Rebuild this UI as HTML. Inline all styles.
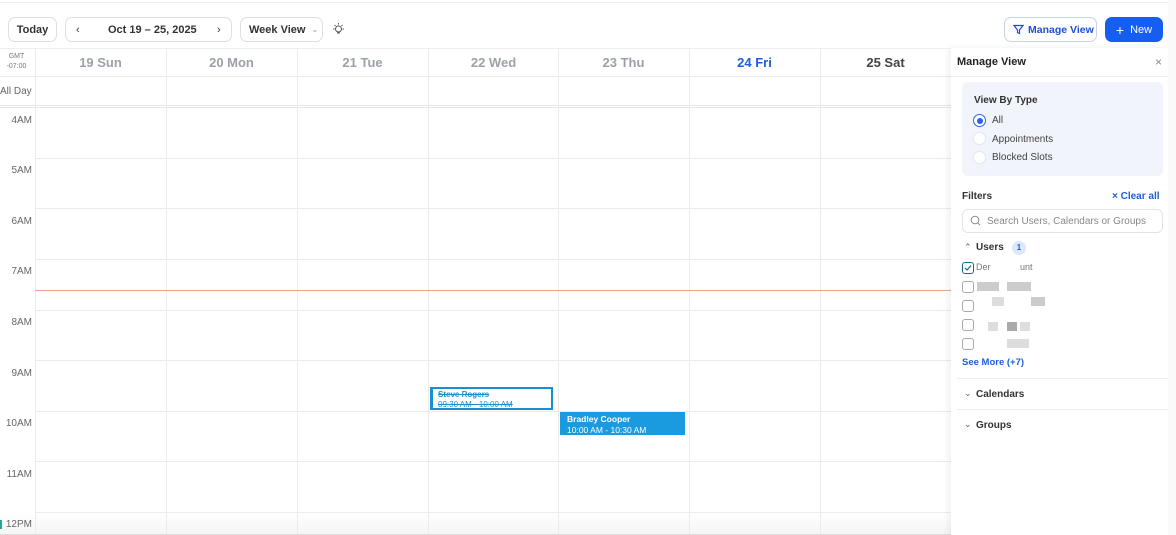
<!DOCTYPE html>
<html><head><style>
*{box-sizing:border-box;margin:0;padding:0}
body{width:1176px;height:535px;overflow:hidden;background:#fff;font-family:"Liberation Sans",sans-serif;color:#333;position:relative}
.a{position:absolute;white-space:nowrap}
.btn{position:absolute;white-space:nowrap;border:1px solid #dcdfe4;border-radius:7px;background:#fff;font-size:11px;font-weight:bold;color:#333;display:flex;align-items:center}
.vl{position:absolute;top:48px;bottom:0;width:1px;background:#ebebeb}
.hl{position:absolute;left:35px;width:916px;height:1px;background:#ebebeb}
.day{position:absolute;top:55px;font-size:13px;font-weight:bold;color:#9ca0a8;text-align:center;width:131px}
.tm{position:absolute;left:0;width:32px;text-align:right;font-size:10px;color:#666}
.cb{position:absolute;left:962px;width:12px;height:12px;border:1px solid #aaa;border-radius:3px;background:#fff}
.bl{position:absolute;height:9px;background:#ccc}
</style></head><body>
<div class="a" style="left:0;top:2px;width:1176px;height:1px;background:#eee"></div>
<div class="btn" style="left:8px;top:17px;width:49px;height:25px;justify-content:center">Today</div>
<div class="btn" style="left:65px;top:17px;width:167px;height:25px"><span style="position:absolute;left:10px;font-weight:normal">‹</span><span style="position:absolute;left:42px">Oct 19 – 25, 2025</span><span style="position:absolute;left:151px;font-weight:normal">›</span></div>
<div class="btn" style="left:240px;top:17px;width:83px;height:25px"><span style="margin-left:8px">Week View</span><span style="margin-left:6px;font-size:8px;color:#999;font-weight:normal">⌄</span></div>
<svg class="a" style="left:331px;top:22px" width="15" height="15" viewBox="0 0 15 15" fill="none" stroke="#555" stroke-width="1"><circle cx="7.5" cy="7" r="3"/><path d="M6 11h3M7.5 1v1.5M2 7h1.5M11.5 7H13M3.5 3l1 1M11.5 3l-1 1"/></svg>
<div class="btn" style="left:1004px;top:17px;width:93px;height:25px;color:#1d4ed8;border-color:#c9d3e4;font-size:10.5px"><svg style="margin-left:8px;flex:none" width="11" height="11" viewBox="0 0 11 11" fill="none" stroke="#1d4ed8" stroke-width="1.2"><path d="M1 1.5h9L6.5 6v3.5L4.5 8.5V6z"/></svg><span style="margin-left:4px">Manage View</span></div>
<div class="btn" style="left:1105px;top:17px;width:58px;height:25px;background:#155eef;border-color:#155eef;color:#fff;justify-content:center;font-weight:normal"><span style="font-size:14px;margin-right:6px">+</span>New</div>

<div class="a" style="left:0;top:513px;width:951px;height:22px;background:linear-gradient(#fff,#f4f4f4)"></div>
<div class="a" style="left:0;top:48px;width:951px;height:1px;background:#eee"></div>
<div class="a" style="left:0;top:52px;width:33px;text-align:center;font-size:7px;color:#777;line-height:10px">GMT<br>-07:00</div>
<div class="day" style="left:35px">19 Sun</div>
<div class="day" style="left:166px">20 Mon</div>
<div class="day" style="left:297px">21 Tue</div>
<div class="day" style="left:428px">22 Wed</div>
<div class="day" style="left:558px">23 Thu</div>
<div class="day" style="left:689px;color:#1d5fd6">24 Fri</div>
<div class="day" style="left:820px;color:#444">25 Sat</div>
<div class="a" style="left:0;top:76px;width:951px;height:1px;background:#ebebeb"></div>
<div class="tm" style="top:86px;font-size:10px;text-align:left">All Day</div>
<div class="a" style="left:0;top:105px;width:951px;height:3px;border-top:1px solid #e6e6e6;border-bottom:1px solid #e6e6e6"></div>
<div class="vl" style="left:35px"></div><div class="vl" style="left:166px"></div><div class="vl" style="left:297px"></div><div class="vl" style="left:428px"></div><div class="vl" style="left:558px"></div><div class="vl" style="left:689px"></div><div class="vl" style="left:820px"></div>
<div class="hl" style="top:158px"></div><div class="hl" style="top:208px"></div><div class="hl" style="top:259px"></div><div class="hl" style="top:310px"></div><div class="hl" style="top:360px"></div><div class="hl" style="top:411px"></div><div class="hl" style="top:461px"></div><div class="hl" style="top:512px"></div>
<div class="tm" style="top:115px">4AM</div><div class="tm" style="top:165px">5AM</div><div class="tm" style="top:216px">6AM</div><div class="tm" style="top:266px">7AM</div><div class="tm" style="top:317px">8AM</div><div class="tm" style="top:368px">9AM</div><div class="tm" style="top:418px">10AM</div><div class="tm" style="top:469px">11AM</div><div class="tm" style="top:519px">12PM</div>
<div class="a" style="left:0;top:520px;width:2px;height:9px;background:#2a9"></div>
<div class="a" style="left:35px;top:290px;width:916px;height:1px;background:#e8a48e"></div>
<div class="a" style="left:0;top:534px;width:1176px;height:1px;background:#ddd"></div>

<div class="a" style="left:430px;top:387px;width:123px;height:23px;border:2px solid #1a8fd0;border-left-width:3px;background:#fff;font-size:8px;color:#1a8fd0;padding:1px 5px;line-height:10px;text-decoration:line-through;font-weight:bold">Steve Rogers<br><span style="font-weight:normal">09:30 AM - 10:00 AM</span></div>
<div class="a" style="left:560px;top:412px;width:125px;height:23px;background:#1a9be0;font-size:8.5px;color:#fff;padding:2px 7px;line-height:10.5px"><b>Bradley Cooper</b><br>10:00 AM - 10:30 AM</div>

<div class="a" style="left:951px;top:48px;width:217px;height:487px;background:#fff;box-shadow:-3px 0 6px rgba(0,0,0,.06)"></div>
<div class="a" style="left:1168px;top:0;width:8px;height:535px;background:#fafafa"></div>
<div class="a" style="left:957px;top:56px;font-size:11px;font-weight:bold;color:#222">Manage View</div>
<div class="a" style="left:1155px;top:55px;font-size:12px;color:#888">×</div>
<div class="a" style="left:951px;top:76px;width:217px;height:1px;background:#eee"></div>
<div class="a" style="left:962px;top:82px;width:201px;height:94px;background:#f1f4fa;border-radius:6px"></div>
<div class="a" style="left:974px;top:95px;font-size:10px;font-weight:bold;color:#333">View By Type</div>
<div class="a" style="left:973px;top:114px;width:13px;height:13px;border-radius:50%;border:1px solid #2563eb;background:#fff"><div style="margin:2.5px;width:6px;height:6px;border-radius:50%;background:#2563eb"></div></div>
<div class="a" style="left:973px;top:132px;width:13px;height:13px;border-radius:50%;border:1px solid #e4e7ee;background:#fff"></div>
<div class="a" style="left:973px;top:151px;width:13px;height:13px;border-radius:50%;border:1px solid #e4e7ee;background:#fff"></div>
<div class="a" style="left:992px;top:115px;font-size:10px;color:#444">All</div>
<div class="a" style="left:992px;top:134px;font-size:10px;color:#444">Appointments</div>
<div class="a" style="left:992px;top:152px;font-size:10px;color:#444">Blocked Slots</div>
<div class="a" style="left:962px;top:191px;font-size:10px;font-weight:bold;color:#333">Filters</div>
<div class="a" style="left:1112px;top:191px;font-size:10px;font-weight:bold;color:#1d5fd6">× Clear all</div>
<div class="a" style="left:962px;top:209px;width:201px;height:24px;border:1px solid #e2e4e8;border-radius:6px;font-size:10px;color:#888;padding:6px 0 0 24px">Search Users, Calendars or Groups</div>
<svg class="a" style="left:970px;top:215px" width="11" height="11" viewBox="0 0 11 11" fill="none" stroke="#888" stroke-width="1"><circle cx="5" cy="5" r="3.8"/><path d="M8 8l2 2"/></svg>
<div class="a" style="left:964px;top:242px;font-size:9px;color:#666">⌃</div>
<div class="a" style="left:976px;top:242px;font-size:10px;font-weight:bold;color:#333">Users</div>
<div class="a" style="left:1012px;top:241px;width:14px;height:14px;border-radius:50%;background:#dbe7fb;font-size:8px;color:#1d5fd6;text-align:center;line-height:14px;font-weight:bold">1</div>
<div class="cb" style="top:262px;border-color:#1a6a8a"><svg width="10" height="10" viewBox="0 0 10 10" style="display:block"><path d="M2 5l2 2 4-4.5" fill="none" stroke="#1a6a8a" stroke-width="1.2"/></svg></div>
<div class="a" style="left:976px;top:262px;font-size:9px;color:#777">Der</div><div class="a" style="left:1020px;top:262px;font-size:9px;color:#777">unt</div>
<div class="cb" style="top:281px"></div><div class="bl" style="left:977px;top:282px;width:22px"></div><div class="bl" style="left:1007px;top:282px;width:24px"></div>
<div class="cb" style="top:300px"></div><div class="bl" style="left:992px;top:297px;width:12px;background:#ddd"></div><div class="bl" style="left:1031px;top:297px;width:14px"></div>
<div class="cb" style="top:319px"></div><div class="bl" style="left:988px;top:322px;width:10px;background:#ddd"></div><div class="bl" style="left:1007px;top:322px;width:10px;background:#aaa"></div><div class="bl" style="left:1020px;top:322px;width:10px;background:#ddd"></div>
<div class="cb" style="top:338px"></div><div class="bl" style="left:1007px;top:339px;width:22px;background:#ddd"></div>
<div class="a" style="left:962px;top:357px;font-size:9.5px;font-weight:bold;color:#1d5fd6">See More (+7)</div>
<div class="a" style="left:957px;top:378px;width:211px;height:1px;background:#eee"></div>
<div class="a" style="left:964px;top:388px;font-size:9px;color:#666">⌄</div>
<div class="a" style="left:976px;top:389px;font-size:10px;font-weight:bold;color:#333">Calendars</div>
<div class="a" style="left:957px;top:409px;width:211px;height:1px;background:#eee"></div>
<div class="a" style="left:964px;top:419px;font-size:9px;color:#666">⌄</div>
<div class="a" style="left:976px;top:420px;font-size:10px;font-weight:bold;color:#333">Groups</div>
</body></html>
